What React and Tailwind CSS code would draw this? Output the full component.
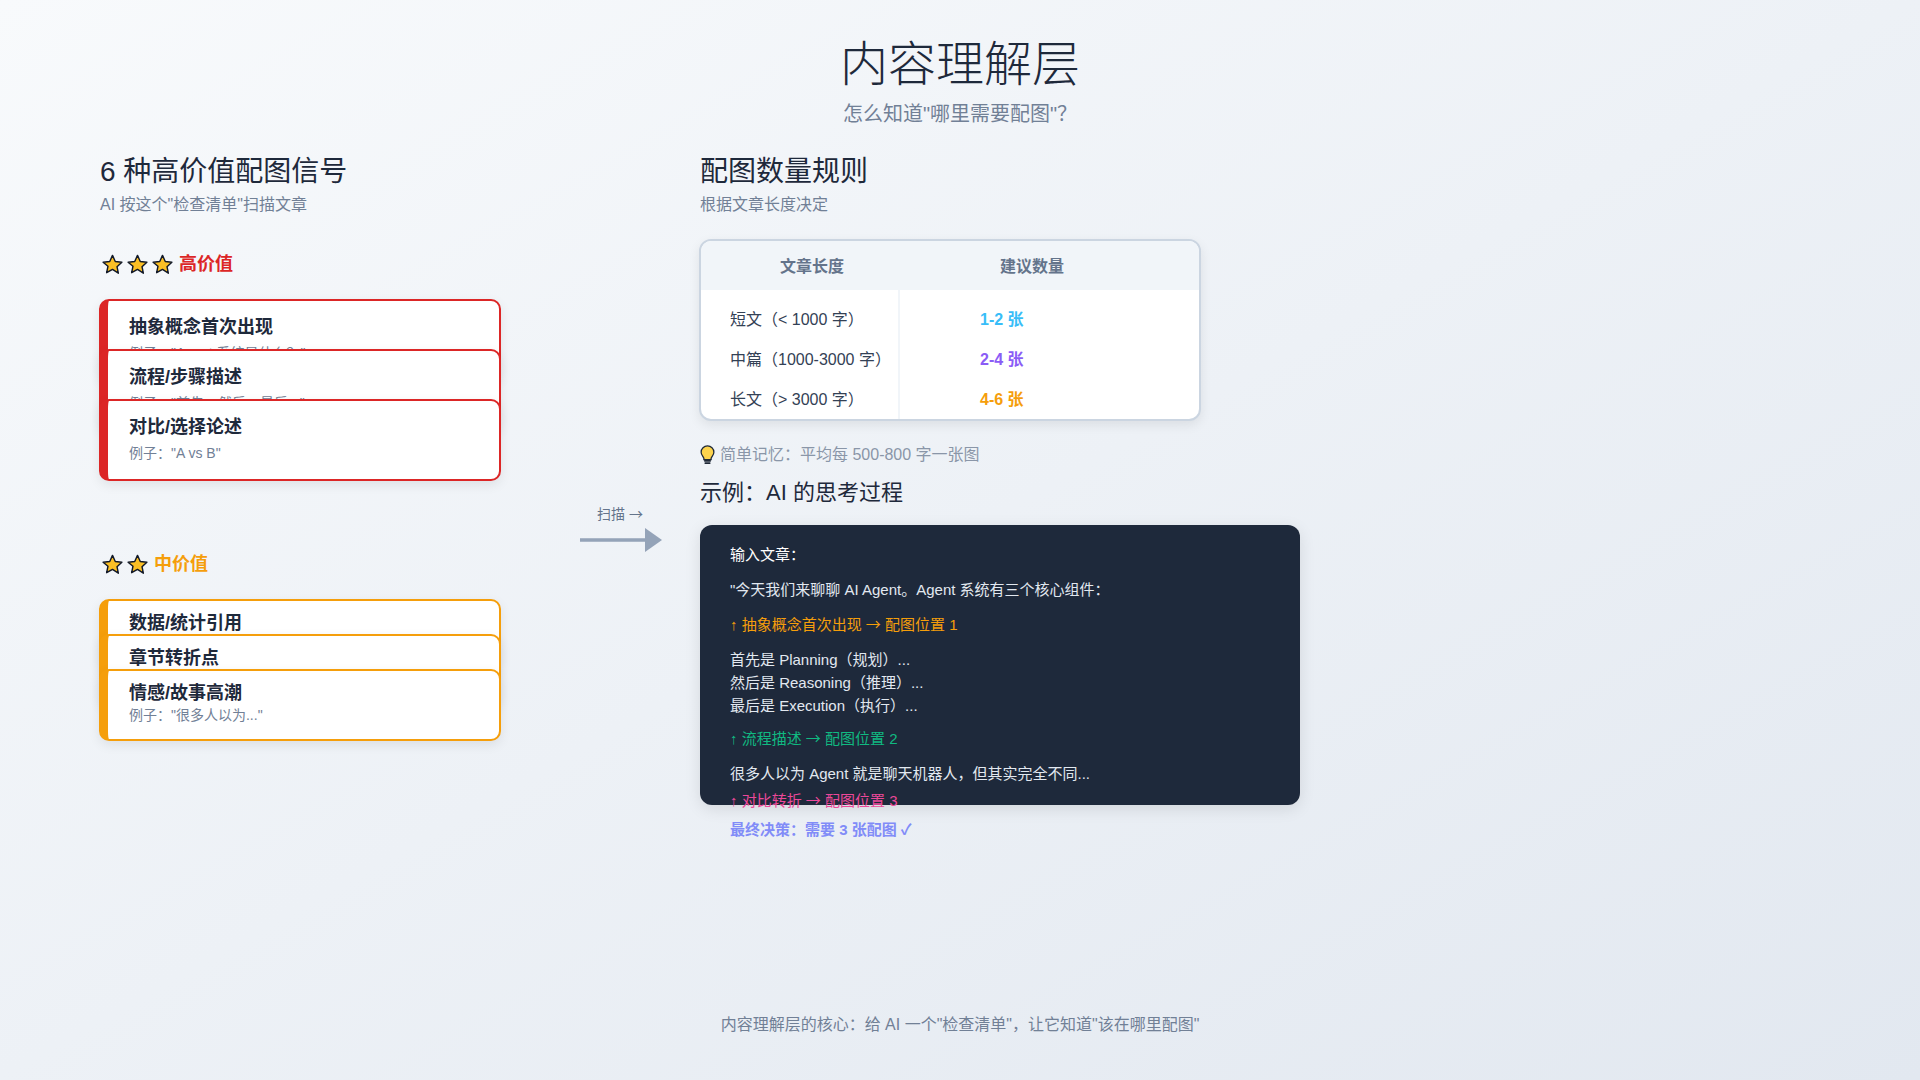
const FONT = "font-['Liberation_Sans','Noto_Sans_CJK_SC',sans-serif]";

function Star() {
  return (
    <svg viewBox="0 0 24 24" className="w-[23px] h-[23px]" fill="#fbbf24" stroke="#111827" strokeWidth="1.5" strokeLinejoin="round">
      <path d="M12 2.5l2.9 6.3 6.9.8-5.1 4.7 1.4 6.8L12 17.1l-6.1 3.5 1.4-6.8L2.2 9.6l6.9-.8z" />
    </svg>
  );
}

function Bulb() {
  return (
    <svg viewBox="0 0 16 22" className="w-[15px] h-[20px]">
      <path d="M8 1a7 7 0 0 0-7 7c0 2.8 2 4.4 3 6.5V16h8v-1.5c1-2.1 3-3.7 3-6.5a7 7 0 0 0-7-7z" fill="#fcd34d" stroke="#1f2937" strokeWidth="1.4" />
      <path d="M5 17.5h6M5.5 20h5" stroke="#1f2937" strokeWidth="1.8" strokeLinecap="round" />
    </svg>
  );
}

function Arrow() {
  return (
    <svg viewBox="0 0 82 24" className="w-[82px] h-[24px]">
      <rect x="0" y="10.25" width="66" height="3.5" fill="#94a3b8" />
      <path d="M65 0l17 12-17 12z" fill="#94a3b8" />
    </svg>
  );
}

function Ar({ children }) {
  return <span className="font-['Noto_Sans_CJK_SC',sans-serif] leading-none">{children}</span>;
}

function HighCard({ title, sub, last }) {
  return (
    <div className={`relative h-[82px] ${last ? "" : "-mb-[32px]"} bg-white border-2 border-[#dc2626] border-l-[9px] rounded-[10px] pl-[21px] pr-[20px] pt-[14px] shadow-[0_4px_12px_rgba(0,0,0,0.08)]`}>
      <div className="text-[18px] leading-[24px] font-bold text-[#1e293b]">{title}</div>
      <div className="mt-[4px] text-[14px] leading-[20px] text-[#718096]">{sub}</div>
    </div>
  );
}

function MidCard({ title, sub, last }) {
  return (
    <div className={`relative h-[72px] ${last ? "" : "-mb-[37px]"} bg-white border-2 border-[#f59e0b] border-l-[9px] rounded-[10px] pl-[21px] pr-[20px] pt-[11px] shadow-[0_4px_12px_rgba(0,0,0,0.08)]`}>
      <div className="text-[18px] leading-[22px] font-semibold text-[#1e293b]">{title}</div>
      {sub && <div className="mt-[1px] text-[14px] leading-[20px] text-[#718096]">{sub}</div>}
    </div>
  );
}

const rows = [
  ["短文（< 1000 字）", "1-2 张", "text-[#38bdf8]"],
  ["中篇（1000-3000 字）", "2-4 张", "text-[#8b5cf6]"],
  ["长文（> 3000 字）", "4-6 张", "text-[#f59e0b]"],
];

export default function App() {
  return (
    <div className={`w-full h-[1080px] overflow-hidden flex flex-col bg-gradient-to-br from-[#f8fafc] to-[#e2e8f0] ${FONT}`}>
      <header className="pt-[33px] text-center">
        <h1 className="text-[48px] leading-[64px] font-light text-[#1e293b]">内容理解层</h1>
        <p className="mt-[3px] text-[20px] leading-[28px] text-[#718096]">怎么知道"哪里需要配图"？</p>
      </header>

      <main className="mt-[22px] px-[100px] flex">
        <section className="w-[400px]">
          <h2 className="pt-[2px] text-[28px] leading-[40px] font-normal text-[#1e293b]">6 种高价值配图信号</h2>
          <p className="mt-[1px] text-[16px] leading-[24px] text-[#718096]">AI 按这个"检查清单"扫描文章</p>

          <div className="mt-[33px] h-[28px] flex items-center">
            <div className="flex gap-[2px] ml-[1px]"><Star /><Star /><Star /></div>
            <span className="ml-[5px] text-[18px] font-bold text-[#dc2626]">高价值</span>
          </div>
          <div className="mt-[21px] -mx-[1px]">
            <HighCard title="抽象概念首次出现" sub={'例子："Agent 系统是什么？"'} />
            <HighCard title="流程/步骤描述" sub={'例子："首先、然后、最后..."'} />
            <HighCard title="对比/选择论述" sub={'例子："A vs B"'} last />
          </div>

          <div className="mt-[69px] h-[28px] flex items-center">
            <div className="flex gap-[2px] ml-[1px]"><Star /><Star /></div>
            <span className="ml-[5px] text-[18px] font-bold text-[#f59e0b]">中价值</span>
          </div>
          <div className="mt-[21px] -mx-[1px]">
            <MidCard title="数据/统计引用" />
            <MidCard title="章节转折点" />
            <MidCard title="情感/故事高潮" sub={'例子："很多人以为..."'} last />
          </div>
        </section>

        <div className="w-[200px] pt-[352px] pl-[80px] flex flex-col">
          <div className="pl-[17px] text-[14px] leading-[24px] text-[#64748b]">扫描 <Ar>→</Ar></div>
          <div className="mt-[2px]"><Arrow /></div>
        </div>

        <section className="w-[600px]">
          <h2 className="pt-[2px] text-[28px] leading-[40px] font-normal text-[#1e293b]">配图数量规则</h2>
          <p className="mt-[1px] text-[16px] leading-[24px] text-[#718096]">根据文章长度决定</p>

          <div className="mt-[22px] -mx-[1px] w-[502px] h-[182px] overflow-hidden bg-white border-2 border-[#cbd5e1] rounded-[12px] shadow-[0_4px_12px_rgba(0,0,0,0.08)]">
            <div className="h-[49px] pt-[2px] bg-[#f1f5f9] flex items-center pl-[79px] gap-[156px] text-[16px] font-bold text-[#64748b]">
              <span>文章长度</span>
              <span>建议数量</span>
            </div>
            <div className="grid grid-cols-[199px_1fr]">
              <div className="border-r-2 border-[#f1f5f9] pt-[10px] pl-[29px] text-[16px] text-[#334155]">
                {rows.map((r) => <div key={r[0]} className="h-[40px] flex items-center">{r[0]}</div>)}
              </div>
              <div className="pt-[10px] pl-[80px] text-[16px] font-bold">
                {rows.map((r) => <div key={r[1]} className={`h-[40px] flex items-center ${r[2]}`}>{r[1]}</div>)}
              </div>
            </div>
          </div>

          <div className="mt-[22px] h-[24px] flex items-center gap-[5px] text-[16px] text-[#8a96a8]">
            <Bulb />
            <span>简单记忆：平均每 500-800 字一张图</span>
          </div>
          <h3 className="mt-[10px] text-[22px] leading-[32px] font-normal text-[#1e293b]">示例：AI 的思考过程</h3>

          <div className="mt-[16px] w-[600px] h-[280px] bg-[#1e293b] rounded-[12px] px-[30px] pt-[18px] text-[15px] leading-[23px] text-[#e2e8f0] shadow-[0_4px_16px_rgba(0,0,0,0.1)]">
            <p className="text-white">输入文章：</p>
            <p className="mt-[12px]">"今天我们来聊聊 AI Agent。Agent 系统有三个核心组件：</p>
            <p className="mt-[12px] text-[#f59e0b]">↑ 抽象概念首次出现 <Ar>→</Ar> 配图位置 1</p>
            <p className="mt-[12px]">首先是 Planning（规划）...<br />然后是 Reasoning（推理）...<br />最后是 Execution（执行）...</p>
            <p className="mt-[10px] text-[#10b981]">↑ 流程描述 <Ar>→</Ar> 配图位置 2</p>
            <p className="mt-[12px]">很多人以为 Agent 就是聊天机器人，但其实完全不同...</p>
            <p className="mt-[4px] text-[#ec4899]">↑ 对比转折 <Ar>→</Ar> 配图位置 3</p>
            <p className="mt-[6px] font-bold text-[#818cf8]">最终决策：需要 3 张配图 ✓</p>
          </div>
        </section>
      </main>

      <footer className="mt-auto pb-[43px] text-center text-[16px] leading-[24px] text-[#718096]">
        内容理解层的核心：给 AI 一个"检查清单"，让它知道"该在哪里配图"
      </footer>
    </div>
  );
}
